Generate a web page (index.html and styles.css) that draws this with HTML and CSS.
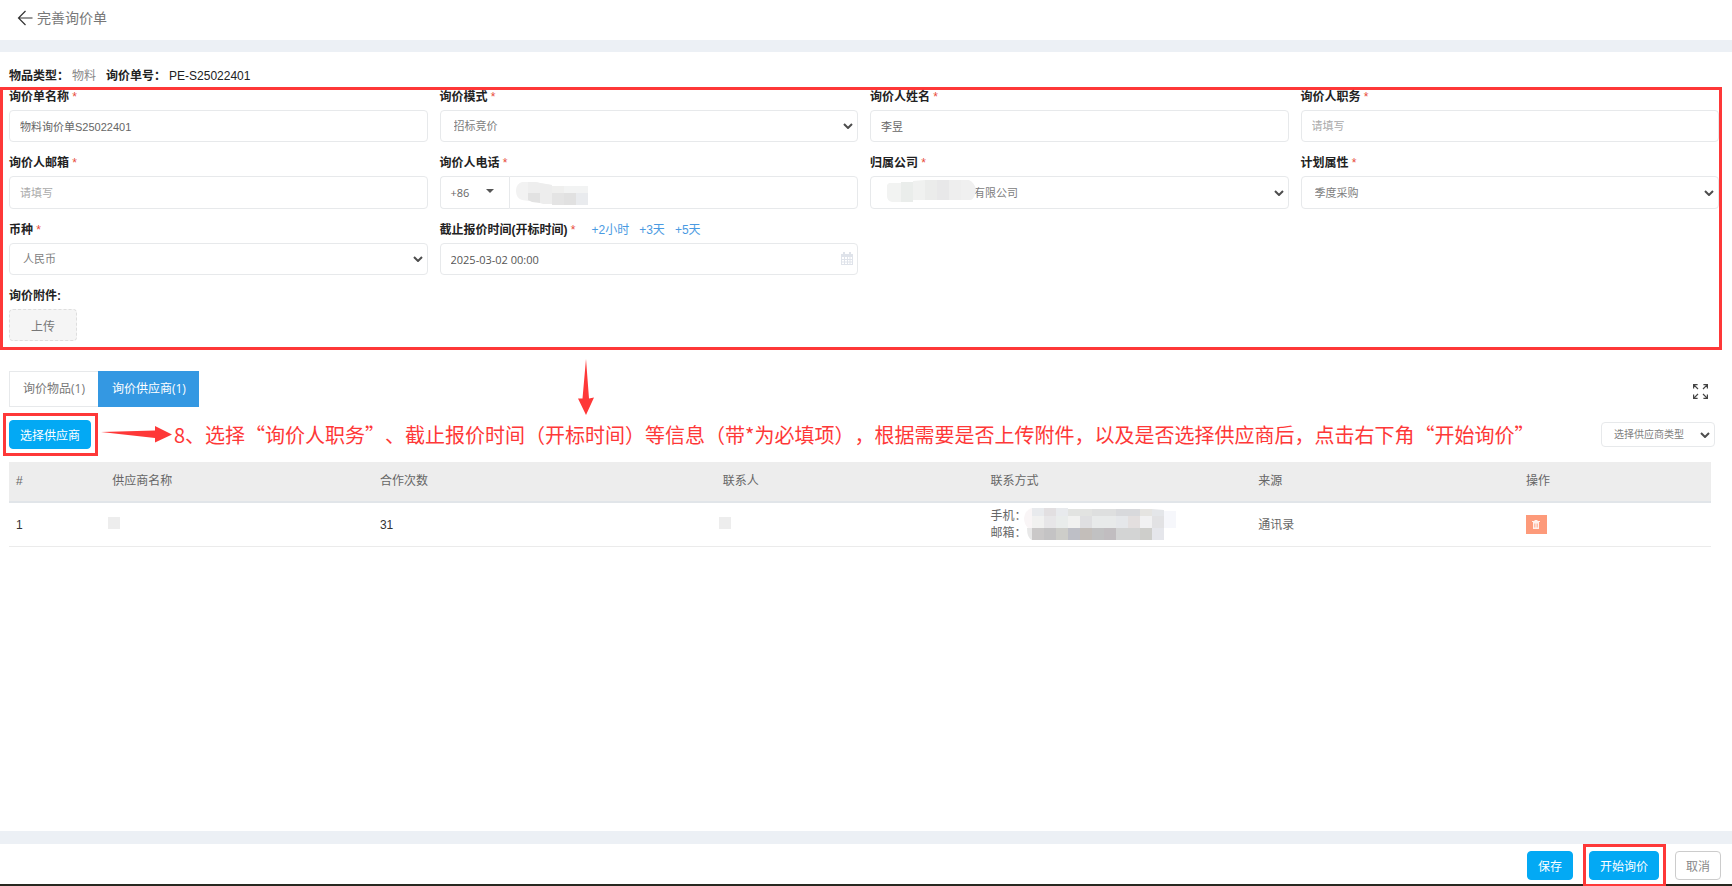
FILE: index.html
```html
<!DOCTYPE html>
<html lang="zh-CN">
<head>
<meta charset="utf-8">
<title>完善询价单</title>
<link rel="stylesheet" href="styles.css">
</head>
<body>
<svg class="sprite" aria-hidden="true">
  <symbol id="chevron" viewBox="0 0 10 6"><path d="M1 1l4 4 4-4" fill="none" stroke="#4d4d4d" stroke-width="2"/></symbol>
</svg>
<header class="topbar">
  <a href="#" class="back" aria-label="返回">
    <svg width="16" height="16" viewBox="0 0 16 16" fill="none" stroke="#333" stroke-width="1.2"><path d="M8.5 1L1.5 8l7 7M1.5 8H15.5"/></svg>
  </a>
  <h1>完善询价单</h1>
</header>
<main class="content">
  <div class="summary"><b>物品类型：</b><span class="kind">物料</span><b>询价单号：</b><span>PE-S25022401</span></div>

  <form class="inquiry">
    <div class="fields">
      <div class="field">
        <label for="name">询价单名称 <i>*</i></label>
        <div class="control"><input id="name" type="text" value="物料询价单S25022401"></div>
      </div>
      <div class="field">
        <label for="mode">询价模式 <i>*</i></label>
        <div class="control"><select id="mode"><option>招标竞价</option></select><svg class="chevron"><use href="#chevron"/></svg></div>
      </div>
      <div class="field">
        <label for="person">询价人姓名 <i>*</i></label>
        <div class="control"><input id="person" type="text" value="李昱"></div>
      </div>
      <div class="field">
        <label for="duty">询价人职务 <i>*</i></label>
        <div class="control"><input id="duty" type="text" placeholder="请填写"></div>
      </div>
      <div class="field">
        <label for="mail">询价人邮箱 <i>*</i></label>
        <div class="control"><input id="mail" type="text" placeholder="请填写"></div>
      </div>
      <div class="field">
        <label for="phone">询价人电话 <i>*</i></label>
        <div class="control phone">
          <button type="button" class="code">+86 <span class="caret"></span></button>
          <input id="phone" type="text">
          <svg class="mask mask-phone" width="73" height="24" viewBox="0 0 73 24">
            <path d="M6 1h14l4 1 12 2v16H13L6 19Q0 17 0 10 0 3 6 1z" fill="#f2f2f2"/>
            <path d="M12 1h8l4 1v10H12z" fill="#eee"/><path d="M12 12h12v10l-8-1-4-2z" fill="#e2e2e2"/>
            <path d="M24 2l12 2v19H27l-3-1z" fill="#ededed"/>
            <path d="M36 5h12v7H36z" fill="#efefee"/><path d="M36 12h12v12H36z" fill="#e4e4e4"/>
            <path d="M48 5h24v7H48z" fill="#f2f3f3"/><path d="M48 12h12v12H48z" fill="#e1e1e1"/><path d="M60 12h12v12H60z" fill="#e9ebee"/>
          </svg>
        </div>
      </div>
      <div class="field">
        <label for="company">归属公司 <i>*</i></label>
        <div class="control"><select id="company" class="masked"><option>有限公司</option></select><svg class="chevron"><use href="#chevron"/></svg>
          <svg class="mask mask-company" width="90" height="22" viewBox="0 0 90 22">
            <path d="M2 3h12v19H5Q0 21 0 16V5z" fill="#f2f3f2"/><path d="M14 2h12v20H14z" fill="#eaedeb"/>
            <path d="M26 1l12-1v20H26z" fill="#f0f1f0"/><path d="M38 0h12v20H38z" fill="#ebeceb"/><path d="M50 0h12v20H50z" fill="#e8e8e9"/>
            <path d="M62 0h12v20H62z" fill="#eee"/><path d="M74 0h8q6 3 7 10-1 8-5 10H74z" fill="#f0f0f0"/>
          </svg>
        </div>
      </div>
      <div class="field">
        <label for="plan">计划属性 <i>*</i></label>
        <div class="control"><select id="plan"><option>季度采购</option></select><svg class="chevron"><use href="#chevron"/></svg></div>
      </div>
      <div class="field">
        <label for="currency">币种 <i>*</i></label>
        <div class="control"><select id="currency"><option>人民币</option></select><svg class="chevron"><use href="#chevron"/></svg></div>
      </div>
      <div class="field">
        <div class="label-row">
          <label for="deadline">截止报价时间(开标时间) <i>*</i></label>
          <a href="#">+2小时</a><a href="#">+3天</a><a href="#">+5天</a>
        </div>
        <div class="control"><input id="deadline" class="date" type="text" value="2025-03-02 00:00">
          <svg class="calendar" width="12" height="13" viewBox="0 0 12 13"><path d="M0 2h12v11H0z" fill="#dfe3ea"/><path d="M2 0h2v4H2zM8 0h2v4H8z" fill="#dfe3ea"/><path d="M1 5h2v2H1zM4 5h2v2H4zM7 5h1.500v2H7zM9.500 5H11v2H9.500zM1 8h2v1.500H1zM4 8h2v1.500H4zM7 8h1.500v1.500H7zM9.500 8H11v1.500H9.500zM1 10.500h2V12H1zM4 10.500h2V12H4zM7 10.500h1.500V12H7zM9.500 10.500H11V12H9.500z" fill="#fff"/></svg>
        </div>
      </div>
    </div>
    <div class="field attach">
      <span class="label">询价附件:</span>
      <button type="button" class="upload">上传</button>
    </div>
  </form>

  <svg class="arrow-down" width="16" height="56" viewBox="0 0 16 56"><path d="M8 0l3 39.500 5-1L8 56 0 39.500h4.500z" fill="#fe3838"/></svg>

  <div class="tabs">
    <button type="button" class="tab">询价物品(1)</button>
    <button type="button" class="tab active">询价供应商(1)</button>
    <button type="button" class="expand" aria-label="全屏">
      <svg width="15" height="15" viewBox="0 0 15 15" fill="none" stroke="#444" stroke-width="1.200"><path d="M.6 4.500V.6h4M.6.6L5 5M10.400.6h4v3.900M14.400.6L10 5M.6 10.500v3.900h4M.6 14.400L5 10M10.400 14.400h4v-3.900M14.400 14.400L10 10"/></svg>
    </button>
  </div>

  <div class="toolbar">
    <div class="highlight"><button type="button" class="btn primary">选择供应商</button></div>
    <svg class="arrow-right" width="71" height="17" viewBox="0 0 71 17"><path d="M0 6l54-1.500V0l17 8.500L54 16.500V12z" fill="#fe3838"/></svg>
    <p class="note">8、选择“询价人职务”、截止报价时间（开标时间）等信息（带*为必填项），根据需要是否上传附件，以及是否选择供应商后，点击右下角“开始询价”</p>
    <div class="control filter"><select aria-label="选择供应商类型"><option>选择供应商类型</option></select><svg class="chevron"><use href="#chevron"/></svg></div>
  </div>

  <table class="suppliers">
    <colgroup><col class="c-index"><col class="c-std"><col class="c-count"><col class="c-std"><col class="c-std"><col class="c-std"><col></colgroup>
    <thead><tr><th>#</th><th>供应商名称</th><th>合作次数</th><th>联系人</th><th>联系方式</th><th>来源</th><th>操作</th></tr></thead>
    <tbody><tr>
      <td>1</td>
      <td><span class="blank"></span></td>
      <td>31</td>
      <td><span class="blank"></span></td>
      <td class="contact"><div>手机：</div><div>邮箱：</div>
        <svg class="mask mask-contact" width="152" height="32" viewBox="0 0 152 32">
          <path d="M8 0v20H4Q0 16 0 10 1 2 8 0z" fill="#f9f5f6"/><path d="M8 20v12q-5-2-5-12z" fill="#e8e8e8"/>
          <path d="M8 0h12v8H8zM32 0h12v8H32z" fill="#e8eaed"/><path d="M20 0h12v8H20z" fill="#e2dfe1"/>
          <path d="M44 1h24v7H44z" fill="#e2e3e1"/><path d="M68 1h12v7H68zM80 1h12v7H80z" fill="#dedfdf"/><path d="M92 1h24v7H92z" fill="#d8d9dc"/><path d="M116 1h12v7h-12z" fill="#e5e4e1"/><path d="M128 1l12 1v6h-12z" fill="#e4e6e9"/>
          <path d="M8 8h12v12H8zM44 8h12v12H44z" fill="#f1f1f0"/><path d="M20 8h12v12H20z" fill="#e7e6e8"/><path d="M32 8h12v12H32z" fill="#e9eceb"/><path d="M56 8h12v12H56z" fill="#dfdfe1"/><path d="M68 8h24v12H68z" fill="#e8eaea"/><path d="M92 8h12v12H92z" fill="#e5e7ea"/><path d="M104 8h12v12h-12z" fill="#e3dfdf"/><path d="M116 8h12v12h-12z" fill="#f1f1f2"/><path d="M128 8h12v12h-12z" fill="#e2e2e4"/><path d="M140 3h12v17h-12z" fill="#f6f7fb"/>
          <path d="M8 20h12v12H8z" fill="#cac8c8"/><path d="M20 20h12v12H20z" fill="#c4c3c4"/><path d="M32 20h12v12H32z" fill="#cdcdc9"/><path d="M44 20h12v12H44z" fill="#bebfc6"/><path d="M56 20h12v12H56z" fill="#c3beba"/><path d="M68 20h24v12H68z" fill="#c1c1c2"/><path d="M80 20h12v12H80z" fill="#c1bdc0"/><path d="M92 20h24v12H92z" fill="#d3d4d4"/><path d="M116 20h12v12h-12z" fill="#cececb"/><path d="M128 20h12v12h-12z" fill="#e5e6eb"/>
        </svg>
      </td>
      <td class="source">通讯录</td>
      <td><button type="button" class="delete" aria-label="删除"><svg width="8" height="9" viewBox="0 0 8 9"><path d="M0 1h2.500V0h3v1H8v1H0zM1 2h6v7H1z" fill="#fff" fill-opacity=".85"/><path d="M2.500 3.500v4M4 3.500v4M5.500 3.500v4" stroke="#fd9a7a" stroke-width=".6"/></svg></button></td>
    </tr></tbody>
  </table>
</main>
<footer class="actions">
  <button type="button" class="btn primary">保存</button>
  <div class="highlight"><button type="button" class="btn primary">开始询价</button></div>
  <button type="button" class="btn plain">取消</button>
</footer>
</body>
</html>
```

FILE: styles.css
```css
* { box-sizing: border-box; }

body {
  margin: 0;
  min-height: 100vh;
  display: flex;
  flex-direction: column;
  background: #fff;
  color: #333;
  font: 12px/18px "Liberation Sans", "Noto Sans CJK SC", sans-serif;
}

button, input, select {
  margin: 0;
  font-family: inherit;
  color: #777;
}

button { cursor: pointer; padding: 0; }
a { color: #4a9ae2; text-decoration: none; }
.sprite { position: absolute; width: 0; height: 0; }

.topbar {
  display: flex;
  align-items: center;
  gap: 4px;
  height: 52px;
  padding: 0 17px 4px;
  border-bottom: 12px solid #ecf0f5;
}
.topbar h1 { margin: 0; font-size: 14px; font-weight: 400; color: #777; }
.back { display: flex; }

.content { flex: 1; display: flex; flex-direction: column; position: relative; padding-top: 15px; }

.summary { height: 20px; padding-left: 9px; color: #222; }
.summary b { color: #222; margin-right: 3px; }
.summary .kind { color: #888; margin-right: 10px; }

.inquiry {
  border: 3px solid #fe3838;
  margin-right: 10px;
  padding: 0 0 6px 6px;
}
.fields { display: grid; grid-template-columns: repeat(4, 1fr); gap: 14px 12px; }
.field { display: flex; flex-direction: column; gap: 5px; }
.field label, .label { font-weight: 700; color: #222; line-height: 15px; }
.field label i { font-style: normal; font-weight: 400; color: #e74c3c; }
.label-row { display: flex; gap: 10px; line-height: 15px; }
.label-row label { margin-right: 6px; }

.control { position: relative; flex: 1; min-height: 32px; display: flex; }
.control input, .control select {
  flex: 1;
  min-width: 0;
  border: 1px solid #e7e9eb;
  border-radius: 4px;
  background: #fff;
  padding: 0 10px;
  font-size: 11px;
  color: #666;
  appearance: none;
}
.control select { padding: 0 24px 0 13px; color: #808080; }
.control select.masked { padding-left: 103px; }
.control input::placeholder { color: #aaa; }
.control .date { font-family: "Open Sans", sans-serif; color: #555; }
.chevron {
  position: absolute;
  right: 5px;
  top: 50%;
  width: 10px;
  height: 6px;
  margin-top: -3px;
  pointer-events: none;
}
.calendar { position: absolute; right: 5px; top: 9px; }

.phone { min-height: 33px; }
.phone .code {
  width: 69px;
  display: flex;
  align-items: center;
  justify-content: space-between;
  padding: 0 15px 0 10px;
  border: 1px solid #e7e9eb;
  border-right: 0;
  border-radius: 4px 0 0 4px;
  background: #fff;
  color: #666;
  font: 11px "Open Sans", sans-serif;
}
.phone input { border-radius: 0 4px 4px 0; }
.caret { border: 4px solid transparent; border-top-color: #555; border-bottom: 0; margin-bottom: 3px; }

.mask { position: absolute; }
.mask-phone { left: 76px; top: 5px; }
.mask-company { left: 17px; top: 4px; }
.mask-contact { left: 40px; top: 5px; }

.attach { margin-top: 14px; align-items: flex-start; }
.upload {
  width: 68px;
  height: 32px;
  border: 1px dashed #dedede;
  border-radius: 4px;
  background: #f5f5f5;
  font-size: 12px;
}

.arrow-down { position: absolute; left: 578px; top: 307px; }

.tabs { display: flex; margin: 21px 24px 6px 9px; height: 36px; }
.tab {
  padding: 0 13px 2px 13px;
  border: 1px solid #e7e9eb;
  border-right: 0;
  background: #fff;
  font: 12px "Open Sans", "Noto Sans CJK SC", sans-serif;
}
.tab.active { background: #3498e2; border-color: #3498e2; color: #fff; }
.expand { display: flex; align-items: flex-end; margin-left: auto; border: 0; background: none; padding-bottom: 8px; }

.highlight { display: flex; border: 3px solid #fe3838; }
.toolbar {
  display: flex;
  align-items: center;
  height: 43px;
  margin: 0 17px 6px 3px;
}
.toolbar .highlight { padding: 4px 4px 4px 3px; }
.btn {
  height: 29px;
  padding: 0 10px;
  border: 1px solid #03a9f4;
  border-radius: 4px;
  font-size: 12px;
}
.primary { background: #03a9f4; color: #fff; }
.plain { background: #fff; border-color: #ccc; color: #888; }
.arrow-right { margin: 0 2px 0 3px; flex: none; }
.note {
  margin: 0;
  font: 20px/28px "Noto Sans CJK SC", sans-serif;
  text-spacing-trim: space-all;
  color: #fe3838;
  white-space: nowrap;
}
.filter { flex: none; width: 114px; min-height: 25px; margin-left: auto; }
.filter select { font-size: 10px; padding: 0 20px 0 12px; }

.suppliers {
  width: calc(100% - 30px);
  margin-left: 9px;
  table-layout: fixed;
  border-collapse: separate;
  border-spacing: 0;
}
.c-index { width: 5.650%; }
.c-std { width: 15.730%; }
.c-count { width: 20.150%; }
.suppliers th {
  height: 41px;
  padding: 0 7px 2px;
  text-align: left;
  font-weight: 400;
  color: #666;
  background: #ededed;
  border-bottom: 2px solid #e1e5e9;
}
.suppliers td { height: 44px; padding: 0 7px; border-bottom: 1px solid #ebebeb; position: relative; }
.contact div { line-height: 17px; color: #666; }
.suppliers .source { color: #666; }
.blank { display: block; width: 12px; height: 12px; margin: 0 0 4px -4px; background: #ededed; }
.delete { display: flex; align-items: center; justify-content: center; width: 21px; height: 19px; border: 0; background: #fd9a7a; }

.actions {
  display: flex;
  align-items: center;
  justify-content: flex-end;
  height: 55px;
  padding-right: 11px;
  border-top: 13px solid #ecf0f5;
  box-shadow: inset 0 -2px #282820;
}
.actions .highlight { margin: 0 9px 0 10px; padding: 4px 4px 4px 3px; }
```
